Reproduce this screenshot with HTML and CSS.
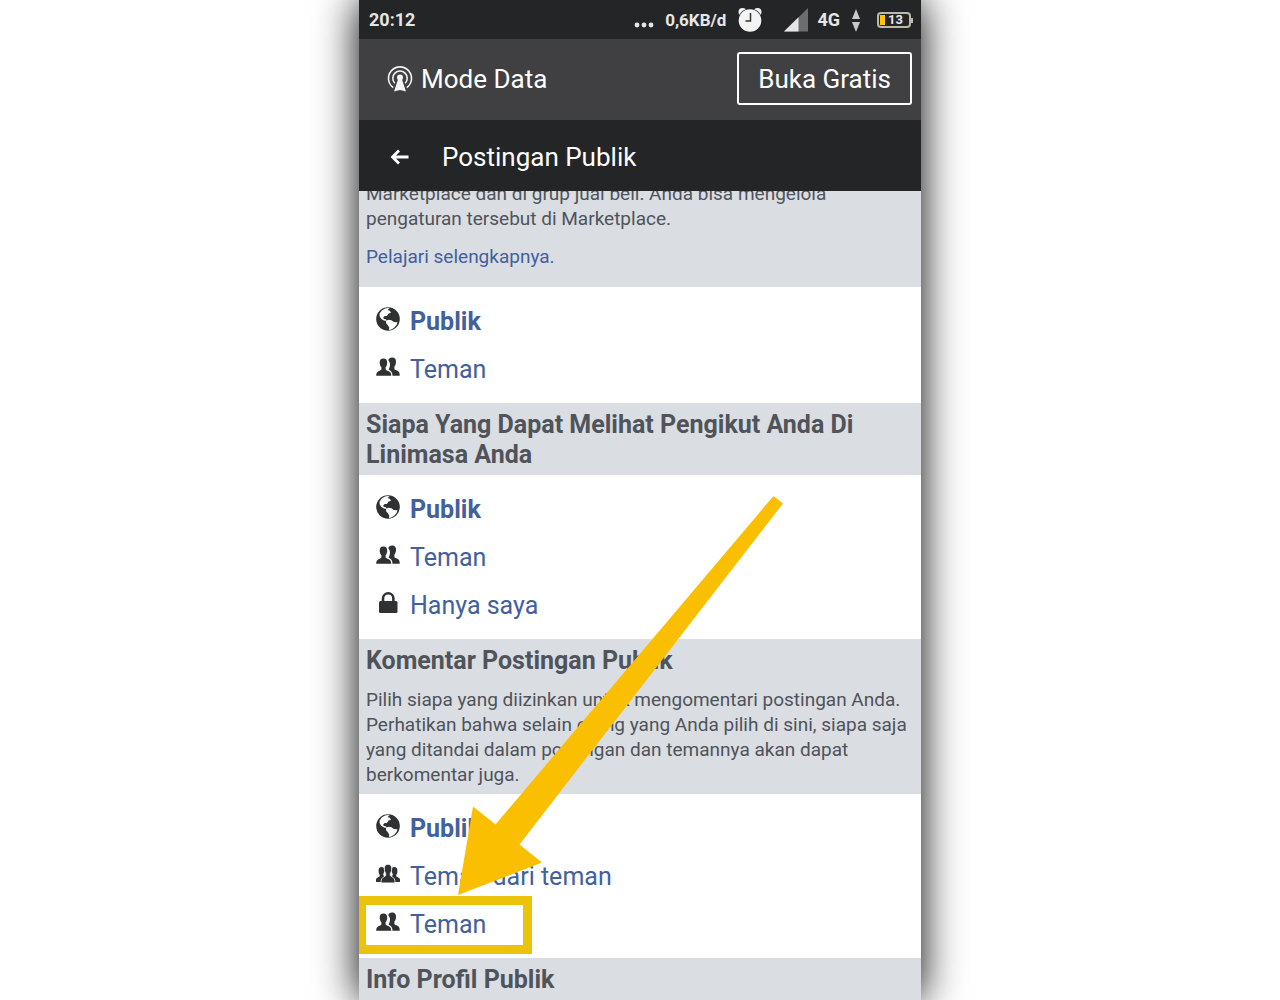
FILE: index.html
```
<!DOCTYPE html>
<html lang="id">
<head>
    <meta charset="utf-8">
    <meta name="viewport" content="width=device-width, initial-scale=1">
    <title>Postingan Publik</title>
    <link rel="stylesheet" href="styles.css">
</head>
<body>
    <!-- icons used more than once -->
    <svg class="sprite" aria-hidden="true">
        <symbol id="globe" viewBox="0 0 24 24">
            <circle cx="12" cy="12" r="11.8" fill="#303133"/>
            <path fill="#fff" d="M3.600 6.400L6 3.300 9 1.600l3-.6 1.600.6-2.200 1.300 2.400.8 1.200 2.100-2.400.6-1.700 2.500-2.200.2-1.500 1.500.6 1.400 2.200.2.600 1.800-2.800-.6-2.600-1.700-1.600-2.500z"/>
            <path fill="#fff" d="M10 13.800l2.500-1.100 2.900.6 2.400 1.700 3.700.3-.8 2.500-2.500 2.900-3 1.900-2.200.5.200-2.700-1.500-2.400-1.600-1.800z"/>
        </symbol>
        <symbol id="friends" viewBox="0 0 24 20">
            <path fill="#303133" d="M16 .5c2.600-.2 4.100 1.500 4 4.200 0 2.100-.6 3.700-1.600 4.800v2.300c0 .7.4 1 1.300 1.300 2.900.9 4 1.900 4 4.900v.7h-7.200c-.1-3.100-1-4.700-3.800-5.900 0-1 1.300-2 1.300-5.300 0-1.700-.6-3.100-1.700-4.200C12.800 1.500 14.100.6 16 .5z"/>
            <path fill="#303133" d="M7.400 1.500c2.500 0 3.900 1.600 3.800 4.200 0 1.900-.6 3.500-1.600 4.500v1.900c0 .7.4 1 1.300 1.300 3 1 4.200 1.900 4.300 4.600v.7H.2v-.7c.1-2.700 1.200-3.600 4-4.600.9-.3 1.200-.6 1.200-1.300v-1.900c-1-1-1.700-2.600-1.700-4.500-.1-2.600 1.200-4.200 3.700-4.200z"/>
        </symbol>
    </svg>

    <div class="phone">
        <div class="status">
            <span class="time">20:12</span>
            <svg class="dots" width="20" height="20" viewBox="0 0 20 20" fill="#e6e6e6"><circle cx="3" cy="15" r="2.400"/><circle cx="10" cy="15" r="2.400"/><circle cx="17" cy="15" r="2.400"/></svg>
            <span class="speed">0,6KB/d</span>
            <svg class="alarm" width="24" height="26" viewBox="0 0 24 26">
                <circle cx="4.500" cy="5" r="4" fill="#f4f4f4"/><circle cx="19.500" cy="5" r="4" fill="#f4f4f4"/>
                <circle cx="12" cy="13.500" r="12" fill="#242527"/><circle cx="12" cy="13.500" r="11.300" fill="#f4f4f4"/>
                <path d="M12.500 6v8H7.500" fill="none" stroke="#333" stroke-width="1.500"/>
            </svg>
            <svg class="signal" width="24" height="24" viewBox="0 0 24 24"><path d="M0 23.500L24 0v23.500z" fill="#6d6d6e"/><path d="M0 23.500L14.500 9.300v14.200z" fill="#e4e4e4"/></svg>
            <span class="net">4G</span>
            <svg class="updown" width="8" height="24" viewBox="0 0 8 24" fill="#c9c9c9"><path d="M4 1l4 10H0zM0 14h8L4 24z"/></svg>
            <span class="battery">
                <span class="level"></span>13
            </span>
        </div>

        <div class="mode">
            <svg width="26" height="28" viewBox="0 0 26 28" fill="none" stroke="#f4f4f4" stroke-width="1.600">
                <path d="M6.200 22.600A11.500 11.500 0 1 1 19.800 22.600"/>
                <path d="M7.800 18.200A7.200 7.200 0 1 1 18.200 18.200"/>
                <circle cx="13" cy="12.500" r="3" fill="#f4f4f4" stroke="none"/>
                <path d="M11.500 13h3l4.500 13.500-2.700-.8-3.300-.6-3.300.6-2.700.8z" fill="#f4f4f4" stroke="none"/>
            </svg>
            <span class="mode-name">Mode Data</span>
            <button type="button" class="free">Buka Gratis</button>
        </div>

        <header class="title">
            <button type="button" class="back" aria-label="Kembali">
                <svg width="20" height="18" viewBox="0 0 20 18" fill="none" stroke="#fff" stroke-width="2.800"><path d="M18.500 9H3M9 2.500L2.500 9 9 15.500"/></svg>
            </button>
            <h1>Postingan Publik</h1>
        </header>

        <main class="content">
            <div class="info first">
                <p>Marketplace dan di grup jual beli. Anda bisa mengelola pengaturan tersebut di Marketplace.</p>
                <p><a href="#">Pelajari selengkapnya.</a></p>
            </div>
            <ul class="options">
                <li><a href="#" class="selected"><svg class="icon"><use href="#globe"/></svg>Publik</a></li>
                <li><a href="#"><svg class="icon"><use href="#friends"/></svg>Teman</a></li>
            </ul>

            <div class="info">
                <h2>Siapa Yang Dapat Melihat Pengikut Anda Di Linimasa Anda</h2>
            </div>
            <ul class="options">
                <li><a href="#" class="selected"><svg class="icon"><use href="#globe"/></svg>Publik</a></li>
                <li><a href="#"><svg class="icon"><use href="#friends"/></svg>Teman</a></li>
                <li><a href="#">
                    <svg class="icon" viewBox="0 0 24 24"><rect x="3" y="10" width="18.500" height="12" rx="1.500" fill="#303133"/><path d="M7 11V7.500a5.200 5.200 0 0 1 10.400 0V11" fill="none" stroke="#303133" stroke-width="2.600"/></svg>Hanya saya</a></li>
            </ul>

            <div class="info">
                <h2>Komentar Postingan Publik</h2>
                <p>Pilih siapa yang diizinkan untuk mengomentari postingan Anda. Perhatikan bahwa selain orang yang Anda pilih di sini, siapa saja yang ditandai dalam postingan dan temannya akan dapat berkomentar juga.</p>
            </div>
            <ul class="options">
                <li><a href="#" class="selected"><svg class="icon"><use href="#globe"/></svg>Publik</a></li>
                <li><a href="#">
                    <svg class="icon" viewBox="0 0 24 20" fill="#303133">
                        <path d="M5.500 3c2 0 3 1.300 2.900 3.500-.1 1.600-.6 2.700-1.200 3.500 0 1.200.3 1.600 1.300 2.100L6 18H-.3c.1-3.400.9-4 3-4.900.9-.4 1.100-.9 1.100-2.100-.7-.8-1.200-2.400-1.200-4C2.400 4.800 3.500 3 5.500 3z"/>
                        <path d="M18.500 3c-2 0-3 1.300-2.900 3.500.1 1.600.6 2.700 1.200 3.500 0 1.200-.3 1.600-1.300 2.100L18 18h6.300c-.1-3.400-.9-4-3-4.900-.9-.4-1.100-.9-1.100-2.100.7-.8 1.200-2.400 1.200-4 .2-2.200-.9-4-2.900-4z"/>
                        <path stroke="#fff" stroke-width=".8" d="M12 .3c2.700 0 3.900 1.900 3.700 4.700-.1 2-.7 3.300-1.400 4.300v2c0 .5.500 1 1.500 1.400 2.200 1 3.200 2.300 3.200 6.200H5c0-3.900 1-5.200 3.200-6.200 1-.4 1.500-.9 1.500-1.400v-2c-.7-1-1.300-2.300-1.400-4.300C8.100 2.200 9.300.3 12 .3z"/>
                    </svg>Teman dari teman</a></li>
                <li class="marked"><a href="#"><svg class="icon"><use href="#friends"/></svg>Teman</a></li>
            </ul>

            <div class="info">
                <h2>Info Profil Publik</h2>
            </div>

            <!-- arrow pointing at the marked option -->
            <svg class="arrow" width="325" height="399" viewBox="0 0 325 399" aria-hidden="true">
                <path fill="#fbbf01" d="M0 399L15 310.500 37.500 328.500 315.500 0 325 7.500 61.500 348.500 84 366.500z"/>
            </svg>
        </main>
    </div>
</body>
</html>
```

FILE: styles.css
```
* {
    box-sizing: border-box;
}
body {
    margin: 0;
    background: #fff;
    font-family: Roboto, "Liberation Sans", sans-serif;
    overflow: hidden;
}
h1, h2, p, ul {
    margin: 0;
    padding: 0;
}
button {
    font: inherit;
    color: #fff;
    background: none;
    cursor: pointer;
}
a {
    color: #42609c;
    text-decoration: none;
}
.sprite {
    position: absolute;
    width: 0;
    height: 0;
}
.phone {
    display: flex;
    flex-direction: column;
    max-width: 562px;
    height: 100vh;
    margin: 0 auto;
    box-shadow: 0 0 40px #000;
}

/* status bar */
.status {
    display: flex;
    flex: none;
    align-items: center;
    height: 39px;
    padding: 0 10px;
    background: #242527;
    color: #e6e6e6;
    font-size: 18px;
    font-weight: bold;
}
.time {
    margin-right: auto;
}
.speed {
    margin: 0 12px 0 11px;
    font-size: 17px;
}
.signal {
    margin: 0 9px 0 22px;
}
.updown {
    margin: 0 17px 0 12px;
}
.battery {
    position: relative;
    width: 34px;
    height: 16px;
    padding-left: 9px;
    border: 2px solid #bbb9a8;
    border-radius: 4px;
    font-size: 13px;
    line-height: 12px;
}
.battery::after {
    content: "";
    position: absolute;
    top: 4px;
    right: -4px;
    width: 2px;
    height: 5px;
    background: #bbb9a8;
}
.level {
    position: absolute;
    top: 1px;
    left: 1px;
    width: 5px;
    height: 10px;
    background: #fcc60c;
}

/* data mode bar */
.mode {
    display: flex;
    flex: none;
    align-items: center;
    height: 81px;
    padding: 0 9px 2px 28px;
    background: #404042;
    color: #fff;
    font-size: 26px;
}
.mode-name {
    margin-left: 8px;
}
.free {
    height: 53px;
    margin-left: auto;
    padding: 0 19px;
    border: 2px solid #fff;
    border-radius: 3px;
}

.title {
    display: flex;
    flex: none;
    align-items: center;
    height: 71px;
    padding: 2px 0 0 31px;
    background: #242527;
    color: #fff;
}
.back {
    display: flex;
    padding: 0;
    border: 0;
}
.title h1 {
    margin-left: 32px;
    font-size: 26px;
    font-weight: normal;
}

/* settings list */
.content {
    position: relative;
    flex: 1;
    min-height: 0;
    overflow: hidden;
    background: #fff;
}
.info {
    padding: 7px 7px 5px;
    background: #dadde2;
    color: #4f535a;
}
.info h2 {
    font-size: 25px;
    line-height: 30px;
}
.info p {
    padding-bottom: 2px;
    font-size: 19px;
    line-height: 25px;
}
.info h2 + p, .info p + p {
    margin-top: 11px;
}
/* the list is scrolled a little */
.first {
    margin-top: -17px;
    padding-bottom: 16px;
}
.options {
    padding: 10px 17px;
    list-style: none;
}
.options a {
    display: flex;
    align-items: center;
    height: 48px;
    font-size: 25px;
}
.options .selected {
    font-weight: bold;
}
.icon {
    width: 24px;
    height: 24px;
    margin: 0 10px 4px 0;
}
.marked {
    position: relative;
}
.marked::after {
    content: "";
    box-sizing: border-box;
    position: absolute;
    top: -4px;
    left: -19px;
    width: 175px;
    height: 58px;
    border: 9px solid #ecc30b;
    pointer-events: none;
}
.arrow {
    position: absolute;
    top: 305px;
    left: 99px;
    pointer-events: none;
}
```
